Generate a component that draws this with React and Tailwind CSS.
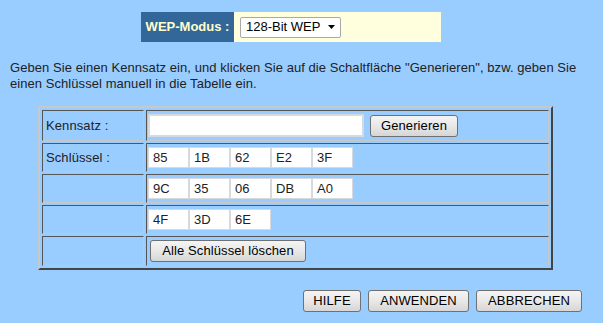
const keyRows = [
  ["85", "1B", "62", "E2", "3F"],
  ["9C", "35", "06", "DB", "A0"],
  ["4F", "3D", "6E"],
];

function Btn({ children, className = "" }) {
  return (
    <button
      type="button"
      className={`flex h-[22px] items-center justify-center rounded-[3px] border border-[#707070] bg-linear-to-b from-[#f4f4f4] via-[#e8e8e8] to-[#d6d6d6] text-[13px] tracking-[0.1px] text-black ${className}`}
    >
      {children}
    </button>
  );
}

function Row({ label, h, children }) {
  return (
    <div className="flex gap-[2px]" style={{ height: h }}>
      <div className="flex w-[102px] items-center border border-t-[#555555] border-l-[#555555] border-b-[#c8c8c8] border-r-[#c8c8c8] pl-[3px] tracking-[0.1px]">
        {label}
      </div>
      <div className="flex flex-1 items-center border border-t-[#555555] border-l-[#555555] border-b-[#c8c8c8] border-r-[#c8c8c8] pl-[1px]">
        {children}
      </div>
    </div>
  );
}

function KeyBoxes({ keys }) {
  return (
    <div className="flex">
      {keys.map((k, i) => (
        <div
          key={i}
          className="flex h-[21px] w-[41px] items-center border border-[#d6d9de] bg-white pl-[4px]"
        >
          {k}
        </div>
      ))}
    </div>
  );
}

export default function App() {
  return (
    <div className="h-[323px] w-full bg-[#99ccff] font-['Liberation_Sans',Arial,sans-serif] text-[13px] text-[#222222]">
      <div className="flex pl-[141px] pt-[12px]">
        <div className="flex h-[30px] w-[93px] items-center justify-center bg-[#336699] font-bold text-[#ffffcc]">
          WEP-Modus :
        </div>
        <div className="flex h-[30px] w-[207px] items-center bg-[#ffffdd] pl-[6px]">
          <div className="flex h-[21px] w-[101px] items-center justify-between rounded-[2px] border border-[#a9a9a9] bg-white pl-[5px] pr-[5px] text-black">
            <span>128-Bit WEP</span>
            <svg width="7" height="4" viewBox="0 0 7 4">
              <path d="M0 0h7L3.5 4z" fill="#000" />
            </svg>
          </div>
        </div>
      </div>

      <p className="mt-[18px] px-[10px] leading-[16px] tracking-[0.06px]">
        Geben Sie einen Kennsatz ein, und klicken Sie auf die Schaltfläche "Generieren", bzw. geben Sie
        einen Schlüssel manuell in die Tabelle ein.
      </p>

      <div className="ml-[38px] mt-[14px] flex w-[515px] flex-col gap-[2px] border-2 border-t-[#c8c8c8] border-l-[#c8c8c8] border-b-[#444444] border-r-[#444444] p-[2px]">
        <Row label="Kennsatz :" h={31}>
          <div className="h-[23px] w-[216px] border-2 border-[#d6d9de] bg-white" />
          <Btn className="ml-[6px] w-[88px]">Generieren</Btn>
        </Row>
        <Row label="Schlüssel :" h={29}>
          <KeyBoxes keys={keyRows[0]} />
        </Row>
        <Row label="" h={29}>
          <KeyBoxes keys={keyRows[1]} />
        </Row>
        <Row label="" h={29}>
          <KeyBoxes keys={keyRows[2]} />
        </Row>
        <Row label="" h={30}>
          <Btn className="ml-[2px] w-[156px]">Alle Schlüssel löschen</Btn>
        </Row>
      </div>

      <div className="mt-[20px] flex justify-end gap-[7px] pr-[21px]">
        <Btn className="w-[58px]">HILFE</Btn>
        <Btn className="w-[101px]">ANWENDEN</Btn>
        <Btn className="w-[106px]">ABBRECHEN</Btn>
      </div>
    </div>
  );
}
